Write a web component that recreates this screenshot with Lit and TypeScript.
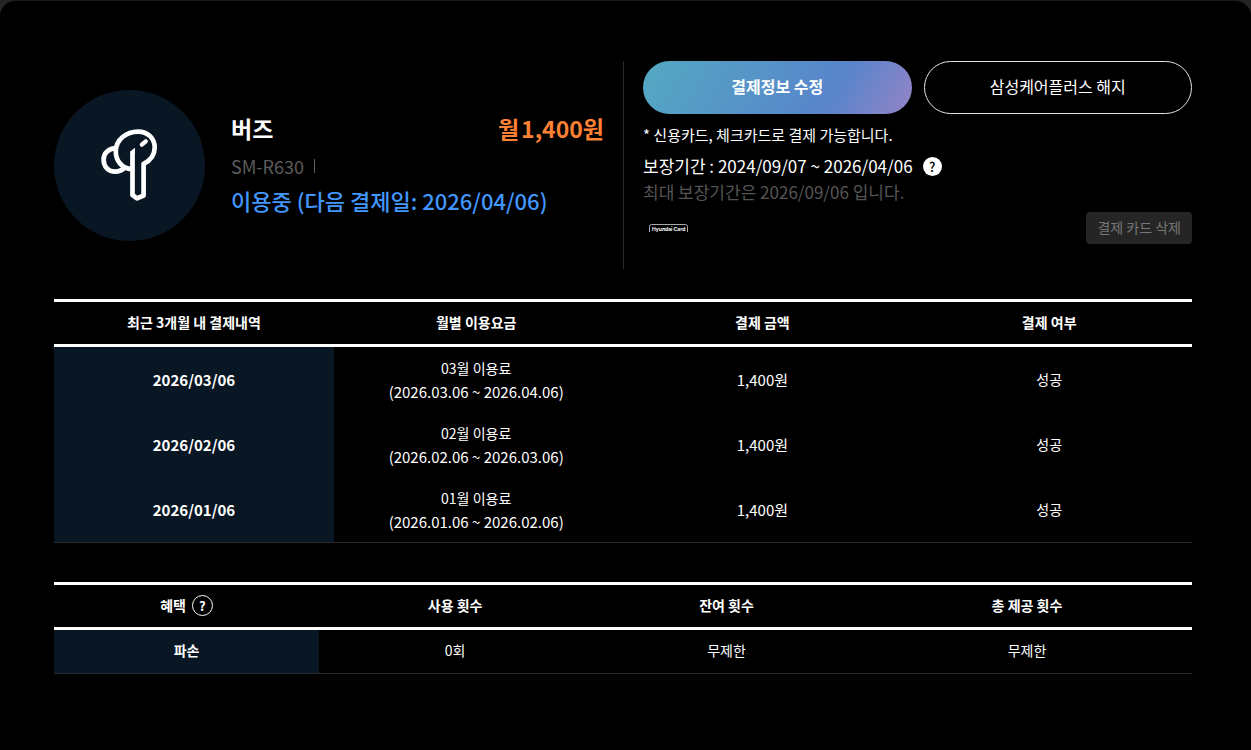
import { LitElement, html, css } from "lit";
import { customElement, state } from "lit/decorators.js";

interface Payment {
  date: string;
  month: string;
  range: string;
  amount: string;
  result: string;
}

@customElement("app-root")
export class AppRoot extends LitElement {
  @state() payments: Payment[] = [
    { date: "2026/03/06", month: "03월 이용료", range: "(2026.03.06 ~ 2026.04.06)", amount: "1,400원", result: "성공" },
    { date: "2026/02/06", month: "02월 이용료", range: "(2026.02.06 ~ 2026.03.06)", amount: "1,400원", result: "성공" },
    { date: "2026/01/06", month: "01월 이용료", range: "(2026.01.06 ~ 2026.02.06)", amount: "1,400원", result: "성공" },
  ];

  static styles = css`
    :host {
      display: block;
      min-height: 100vh;
      background: #242424;
      color: #fff;
      font-family: "Noto Sans CJK KR", "Noto Sans", sans-serif;
      font-size: 15px;
      line-height: 23px;
    }
    * { box-sizing: border-box; }
    p, h2 { margin: 0; }
    button { font: inherit; color: inherit; background: none; border: 0; padding: 0; cursor: pointer; }
    .card {
      min-height: 100vh;
      padding: 60px 59px 60px 54px;
      background: #000;
      border-top: 1px solid #1a1a1a;
      border-radius: 16px 16px 0 0;
    }
    .summary { display: flex; }
    .device {
      flex: 1 1 0;
      display: flex;
      align-items: center;
      gap: 26px;
      padding-right: 19px;
      border-right: 1px solid #2a2a2a;
    }
    .badge {
      flex: none;
      display: grid;
      place-items: center;
      width: 151px;
      height: 151px;
      border-radius: 50%;
      background: #091725;
    }
    .info { flex: 1; display: grid; gap: 4px; padding-bottom: 6px; }
    .title { display: flex; justify-content: space-between; align-items: center; line-height: 38px; }
    .name { font-size: 23px; font-weight: 700; }
    .price { display: flex; gap: 2px; font-size: 23px; font-weight: 700; color: #ff8133; }
    .model { display: flex; align-items: center; gap: 10px; font-size: 18px; line-height: 30px; color: #5c5c5c; }
    .bar { width: 1px; height: 14px; background: #5c5c5c; }
    .status { font-size: 22px; line-height: 30px; font-weight: 500; color: #4297ff; }
    .billing { flex: 1 1 0; max-width: 568px; padding: 0 0 25px 19px; }
    .actions { display: grid; grid-template-columns: 1fr 1fr; gap: 12px; }
    .pill { height: 53px; padding-bottom: 2px; border-radius: 27px; font-size: 16px; }
    .primary { font-weight: 700; background: linear-gradient(120deg, #54a9c3 0%, #5884cb 70%, #9484c6 100%); }
    .outline { border: 1px solid #e4e4e4; }
    .note { margin-top: 9px; }
    .period { display: flex; align-items: center; gap: 10px; margin-top: 7px; font-size: 17px; line-height: 26px; }
    .max { font-size: 17px; line-height: 26px; color: #555; }
    .help { display: grid; place-items: center; border-radius: 50%; font-size: 13px; line-height: 19px; }
    .help.solid { width: 19px; height: 19px; background: #fff; color: #000; font-weight: 500; }
    .help.ring { width: 21px; height: 21px; border: 1px solid #fff; font-weight: 700; }
    .method { display: flex; justify-content: space-between; align-items: center; margin-top: 7px; padding-left: 6px; }
    .remove { height: 32px; padding: 0 11px 2px; border-radius: 4px; background: #252525; color: #767676; font-size: 14px; }
    table { width: 100%; border-collapse: separate; border-spacing: 0; table-layout: fixed; text-align: center; border-top: 3px solid #fff; }
    th, td { padding: 0; }
    thead th { height: 45px; padding-bottom: 2px; border-bottom: 3px solid #fff; font-size: 14px; font-weight: 700; }
    tbody th { background: #091725; font-weight: 700; }
    .history { margin-top: 30px; border-bottom: 1px solid #2a2a2a; }
    .history tbody tr { height: 65px; }
    .small { font-size: 14px; }
    .month { display: block; }
    .h1 { width: 24.6%; }
    .h2 { width: 25%; }
    .h3 { width: 25.3%; }
    .benefits { margin-top: 39px; border-bottom: 1px solid #2a2a2a; }
    .benefits tbody th, .benefits tbody td { height: 43px; padding-bottom: 2px; font-size: 14px; }
    .b1 { width: 23.3%; }
    .b2 { width: 23.9%; }
    .b3 { width: 23.8%; }
    .label { display: flex; justify-content: center; align-items: center; gap: 6px; }
  `;

  private buds() {
    return html`<svg width="57" height="73" viewBox="0 0 57 73" fill="none" stroke="#fff" stroke-width="4.7" stroke-linejoin="round" aria-hidden="true">
      <path d="M31 40.300 C21 39.500 14.800 32 14.800 22.500 C14.800 10.500 25.500 2.600 37 2.600 C47 2.600 53.700 9.500 53.700 18.500 C53.700 26 49.500 31.500 42.600 34.800 V66.500 L36 69.300 L31.500 66 V24"/>
      <path d="M29.150 24.500 V22.500 L34 18.800 V24.500 Z" fill="#fff" stroke="none"/>
      <path d="M15.500 19.200 C7.500 19.200 2.600 24 2.600 30.500 C2.600 38 7.500 42.600 14 42.600 C18.500 42.600 21.500 41 24.500 38"/>
      <path d="M40.800 15.700 L44.800 12.300" stroke-linecap="round" stroke-width="4.200"/>
    </svg>`;
  }

  private cardLogo() {
    return html`<svg width="39" height="9" viewBox="0 0 39 9" role="img" aria-label="Hyundai Card">
      <path d="M.5 8V2.500Q.5.500 2.500.500H36.500Q38.500.500 38.500 2.500V8" fill="none" stroke="#aaa"/>
      <text x="3" y="7" font-size="5" font-weight="700" font-family="Inter, sans-serif" fill="#fff">Hyundai Card</text>
    </svg>`;
  }

  render() {
    return html`
      <main class="card">
        <section class="summary">
          <div class="device">
            <div class="badge">${this.buds()}</div>
            <div class="info">
              <div class="title"><h2 class="name">버즈</h2><p class="price"><span>월</span><span>1,400원</span></p></div>
              <p class="model">SM-R630<span class="bar"></span></p>
              <p class="status">이용중 (다음 결제일: 2026/04/06)</p>
            </div>
          </div>
          <div class="billing">
            <div class="actions">
              <button class="pill primary">결제정보 수정</button>
              <button class="pill outline">삼성케어플러스 해지</button>
            </div>
            <p class="note">* 신용카드, 체크카드로 결제 가능합니다.</p>
            <p class="period">보장기간 : 2024/09/07 ~ 2026/04/06<button class="help solid">?</button></p>
            <p class="max">최대 보장기간은 2026/09/06 입니다.</p>
            <div class="method">${this.cardLogo()}<button class="remove">결제 카드 삭제</button></div>
          </div>
        </section>

        <table class="history">
          <thead>
            <tr>
              <th class="h1" scope="col">최근 3개월 내 결제내역</th>
              <th class="h2" scope="col">월별 이용요금</th>
              <th class="h3" scope="col">결제 금액</th>
              <th scope="col">결제 여부</th>
            </tr>
          </thead>
          <tbody>
            ${this.payments.map((p) => html`
              <tr>
                <th scope="row">${p.date}</th>
                <td><span class="small month">${p.month}</span>${p.range}</td>
                <td>${p.amount}</td>
                <td class="small">${p.result}</td>
              </tr>`)}
          </tbody>
        </table>

        <table class="benefits">
          <thead>
            <tr>
              <th class="b1" scope="col"><span class="label">혜택<button class="help ring">?</button></span></th>
              <th class="b2" scope="col">사용 횟수</th>
              <th class="b3" scope="col">잔여 횟수</th>
              <th scope="col">총 제공 횟수</th>
            </tr>
          </thead>
          <tbody>
            <tr><th scope="row">파손</th><td>0회</td><td>무제한</td><td>무제한</td></tr>
          </tbody>
        </table>
      </main>
    `;
  }
}
